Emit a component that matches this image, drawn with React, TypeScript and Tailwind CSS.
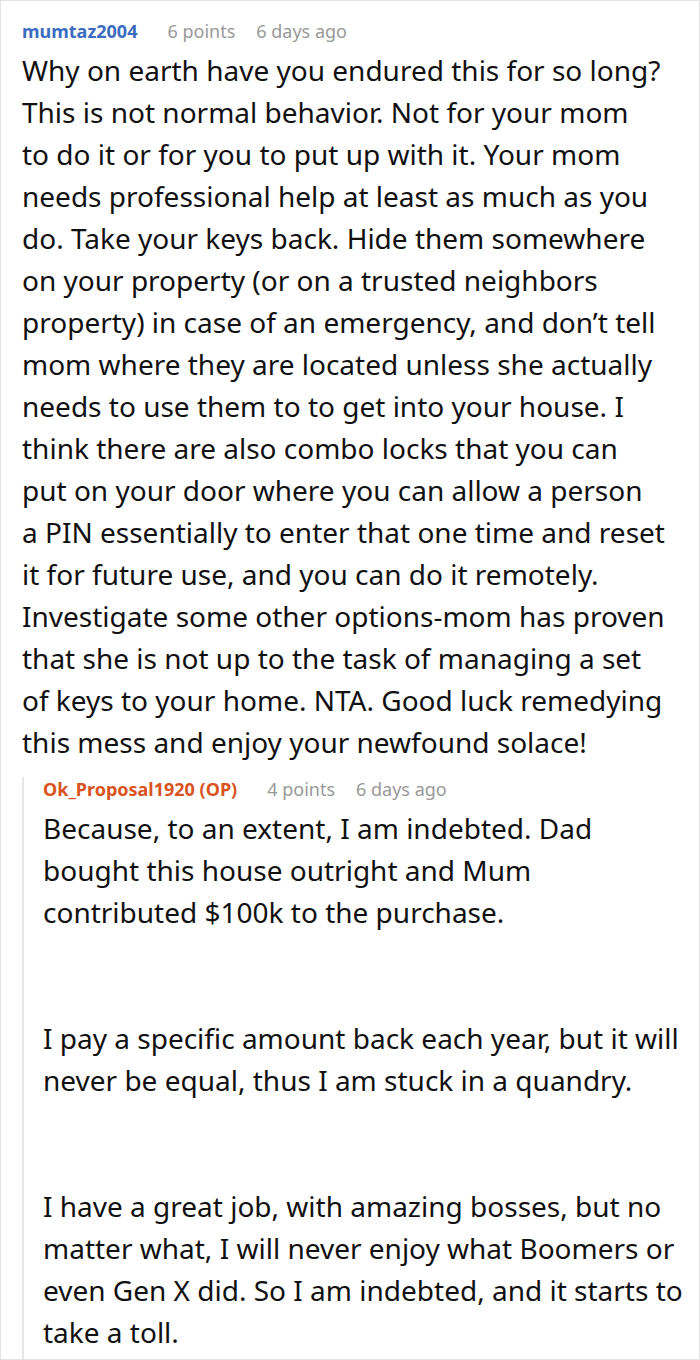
import React from "react";

const body = "text-[28px] leading-[42px] text-[#111]";

function Header({ name, color, points }: { name: string; color: string; points: string }) {
  return (
    <div className="flex items-center h-[24px] text-[18px] leading-[24px] whitespace-nowrap">
      <span className={`font-bold ${color}`}>{name}</span>
      <span className="ml-[30px] text-[#999]">{points}</span>
      <span className="ml-[21px] text-[#999]">6 days ago</span>
    </div>
  );
}

function Lines({ lines }: { lines: string[] }) {
  return (
    <>
      {lines.map((l, i) => (
        <span key={i} className="block whitespace-nowrap">
          {l}
        </span>
      ))}
    </>
  );
}

const main = [
  "Why on earth have you endured this for so long?",
  "This is not normal behavior. Not for your mom",
  "to do it or for you to put up with it. Your mom",
  "needs professional help at least as much as you",
  "do. Take your keys back. Hide them somewhere",
  "on your property (or on a trusted neighbors",
  "property) in case of an emergency, and don’t tell",
  "mom where they are located unless she actually",
  "needs to use them to to get into your house. I",
  "think there are also combo locks that you can",
  "put on your door where you can allow a person",
  "a PIN essentially to enter that one time and reset",
  "it for future use, and you can do it remotely.",
  "Investigate some other options-mom has proven",
  "that she is not up to the task of managing a set",
  "of keys to your home. NTA. Good luck remedying",
  "this mess and enjoy your newfound solace!",
];

export default function App() {
  return (
    <div
      className="w-[700px] h-[1360px] bg-white border border-[#e3e3e3] overflow-hidden"
      style={{ fontFamily: '"Noto Sans", sans-serif' }}
    >
      <div className="pl-[21px] pr-[2px] pt-[18px]">
        <Header name="mumtaz2004" color="text-[#3b6cc0]" points="6 points" />
        <div className={`${body} mt-[6px]`}>
          <Lines lines={main} />
        </div>
        <div className="mt-[14px] border-l-2 border-[#e6e6e6] pl-[19px] pb-[14px]">
          <Header name="Ok_Proposal1920 (OP)" color="text-[#d9531e]" points="4 points" />
          <div className={`${body} mt-[6px]`}>
            <p>
              <Lines
                lines={[
                  "Because, to an extent, I am indebted. Dad",
                  "bought this house outright and Mum",
                  "contributed $100k to the purchase.",
                ]}
              />
            </p>
            <p className="mt-[84px]">
              <Lines
                lines={[
                  "I pay a specific amount back each year, but it will",
                  "never be equal, thus I am stuck in a quandry.",
                ]}
              />
            </p>
            <p className="mt-[84px]">
              <Lines
                lines={[
                  "I have a great job, with amazing bosses, but no",
                  "matter what, I will never enjoy what Boomers or",
                  "even Gen X did. So I am indebted, and it starts to",
                  "take a toll.",
                ]}
              />
            </p>
          </div>
        </div>
      </div>
    </div>
  );
}
